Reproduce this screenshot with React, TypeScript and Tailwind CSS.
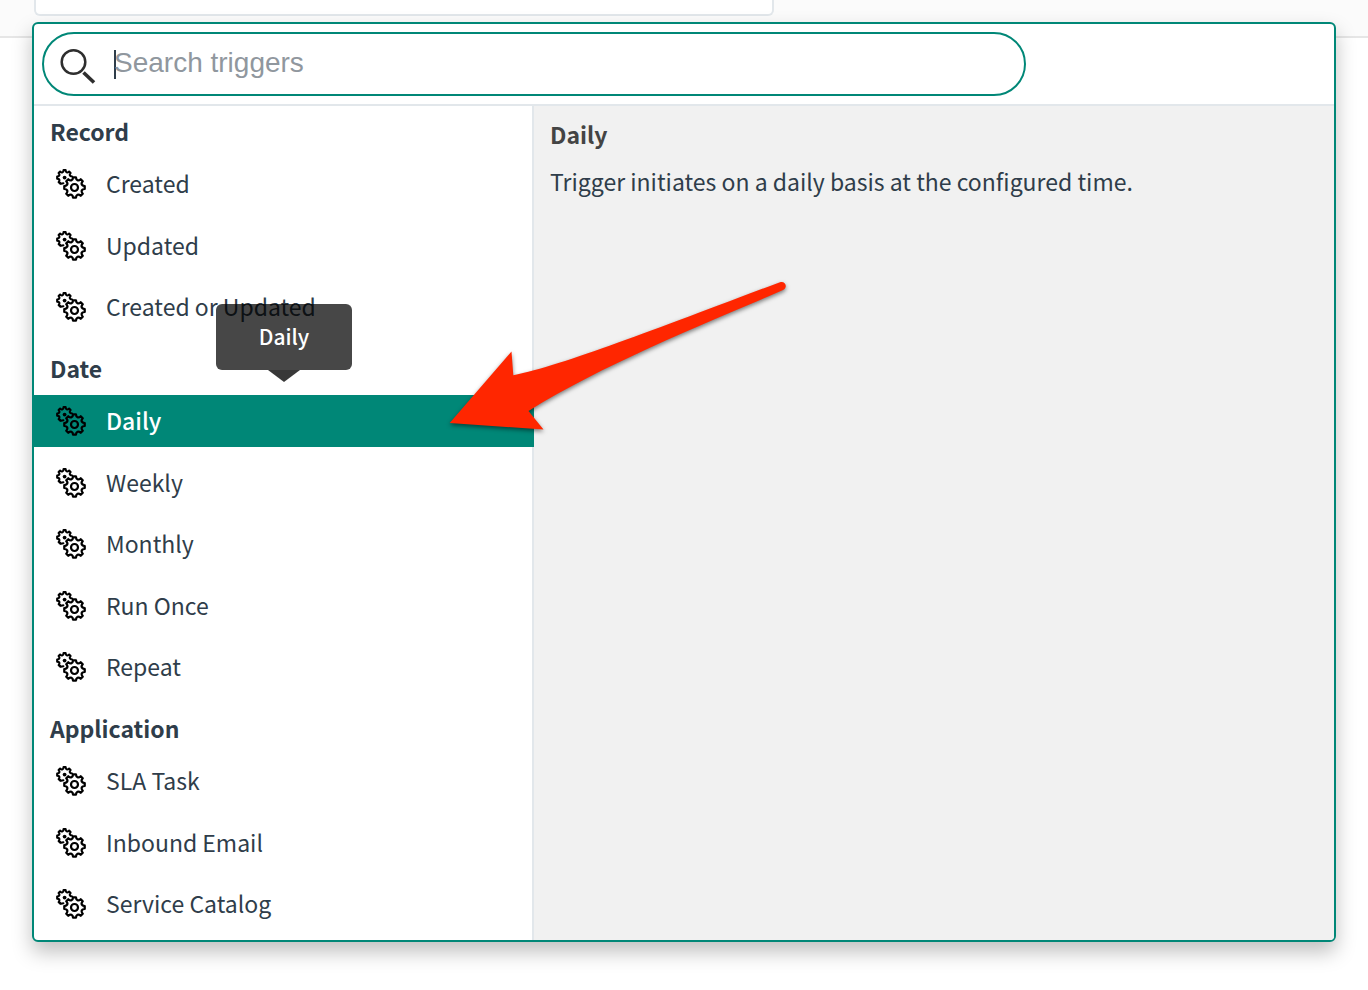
import { useState } from "react";

type Section = { title: string; triggers: string[] };

const sections: Section[] = [
  { title: "Record", triggers: ["Created", "Updated", "Created or Updated"] },
  { title: "Date", triggers: ["Daily", "Weekly", "Monthly", "Run Once", "Repeat"] },
  { title: "Application", triggers: ["SLA Task", "Inbound Email", "Service Catalog"] },
];

const descriptions: Record<string, string> = {
  Daily: "Trigger initiates on a daily basis at the configured time.",
};

/** Outline of an eight-toothed gear with scalloped gaps, running from one tooth index to another. */
function gearPath(cx: number, cy: number, outer: number, inner: number, from: number, to: number) {
  const point = (radius: number, degrees: number) => {
    const angle = (degrees * Math.PI) / 180;
    return `${(cx + radius * Math.cos(angle)).toFixed(2)} ${(cy + radius * Math.sin(angle)).toFixed(2)}`;
  };
  let path = `M${point(outer, from * 45 - 8)}`;
  for (let tooth = from; tooth <= to; tooth++) {
    const center = tooth * 45;
    path += `L${point(outer, center + 8)}C${point(inner, center + 13)} ${point(inner, center + 32)} ${point(outer, center + 37)}`;
  }
  return path;
}

const bigGear = gearPath(18.5, 18.5, 10.3, 7.2, 0, 7) + "Z";
const smallGear = gearPath(8.6, 8.6, 7.5, 5.2, 3, 7);

function GearsIcon() {
  return (
    <svg viewBox="0 0 30 30" className="size-[30px] shrink-0 text-black" fill="none" stroke="currentColor" strokeLinejoin="round" strokeLinecap="round" aria-hidden="true">
      <path d={smallGear} strokeWidth="2.1" />
      <path d="M3.6 13.6L4.9 14.8L7.4 14.2" strokeWidth="2.1" />
      <circle cx="8.6" cy="8.6" r="1.9" fill="currentColor" stroke="none" />
      <path d={bigGear} strokeWidth="2.3" />
      <circle cx="18.5" cy="18.5" r="3.5" strokeWidth="2.2" />
    </svg>
  );
}

function SearchIcon() {
  return (
    <svg viewBox="0 0 36 36" className="mt-1 size-9 shrink-0" fill="none" stroke="#2e2e2e" aria-hidden="true">
      <circle cx="13.5" cy="14" r="11.8" strokeWidth="2.5" />
      <path d="M23.5 24.5L34 34.5" strokeWidth="3.6" />
    </svg>
  );
}

function Tooltip({ text }: { text: string }) {
  return (
    <span role="tooltip" className="pointer-events-none absolute bottom-full left-1/2 mb-[13px] flex -translate-x-1/2 flex-col items-center">
      <span className="flex h-[66px] w-[136px] items-center justify-center rounded-md bg-black/72 text-[21px] font-medium text-white">
        {text}
      </span>
      <svg viewBox="0 0 32 12" className="h-3 w-8" aria-hidden="true">
        <path d="M0 0H32L16 12Z" fill="#383838" />
      </svg>
    </span>
  );
}

function PointerArrow() {
  return (
    <svg viewBox="0 0 360 170" className="pointer-events-none absolute top-[270px] left-[440px] h-[170px] w-[360px] drop-shadow-[0_2px_2px_rgba(0,0,0,0.5)]" aria-hidden="true">
      <path d="M9.7 153L71.5 81.5L73.3 105.3C125 95 220 57 340 12.2C345 10.500 348.500 17 343 20C270 52 165 93 88.500 141L103.500 159.500Z" fill="#ff2600" />
    </svg>
  );
}

export default function App() {
  const [selected, setSelected] = useState("Daily");

  return (
    <div className="relative min-h-screen bg-white pb-12 font-['Noto_Sans_CJK_SC',sans-serif] text-[#2f3d4a]">
      <header className="h-[38px] border-b-2 border-[#e6e6e6] bg-[#fbfbfb] px-[34px]">
        <div className="h-4 w-full max-w-[740px] rounded-b-md border-2 border-t-0 border-[#e2e7eb] bg-white" />
      </header>

      <main className="relative mx-8 -mt-4 rounded-md border-2 border-[#008777] bg-white shadow-[0_10px_20px_rgba(0,0,0,0.25)]">
        <div className="border-b-2 border-[#e2e7eb] p-2">
          <label className="flex h-16 w-full max-w-[984px] items-center rounded-full border-2 border-[#008777] pl-4">
            <SearchIcon />
            <span className="ml-[18px] h-[29px] w-[2px] shrink-0 bg-[#2f3d4a]" aria-hidden="true" />
            <input
              type="text"
              aria-label="Search triggers"
              placeholder="Search triggers"
              className="-ml-[2px] h-full min-w-0 flex-1 bg-transparent pr-6 pb-[2px] font-['Liberation_Sans',sans-serif] text-[28px] outline-none placeholder:text-[#90979e]"
            />
          </label>
        </div>

        <div className="flex">
          <nav className="w-[500px] shrink-0" aria-label="Triggers">
            {sections.map((section) => (
              <section key={section.title}>
                <h2 className="flex h-[52px] items-center border-r-2 border-[#e2e7eb] pb-[2px] pl-4 text-[23px] font-bold">{section.title}</h2>
                <ul className="border-r-2 border-[#e2e7eb]">
                  {section.triggers.map((trigger) => (
                    <li key={trigger} className="-mr-[2px] pb-[10px] even:pb-[9px]">
                      <button
                        type="button"
                        aria-pressed={trigger === selected}
                        onClick={() => setSelected(trigger)}
                        className={
                          trigger === selected
                            ? "relative flex h-[52px] w-full items-center gap-5 bg-[#008777] pl-[22px] text-left text-[23px] font-medium text-white"
                            : "flex h-[52px] w-full items-center gap-5 pl-[22px] text-left text-[23px]"
                        }
                      >
                        <GearsIcon />
                        <span className="pb-[2px]">{trigger}</span>
                        {trigger === selected && <Tooltip text={trigger} />}
                      </button>
                    </li>
                  ))}
                </ul>
              </section>
            ))}
          </nav>

          <article className="min-w-0 flex-1 rounded-br-sm bg-[#f1f1f1] px-4 pt-[10px]">
            <h1 className="text-[23px] leading-9 font-bold text-[#444444]">{selected}</h1>
            <p className="mt-[11px] text-[23px] leading-9">{descriptions[selected]}</p>
          </article>
        </div>
      </main>

      <PointerArrow />
    </div>
  );
}
